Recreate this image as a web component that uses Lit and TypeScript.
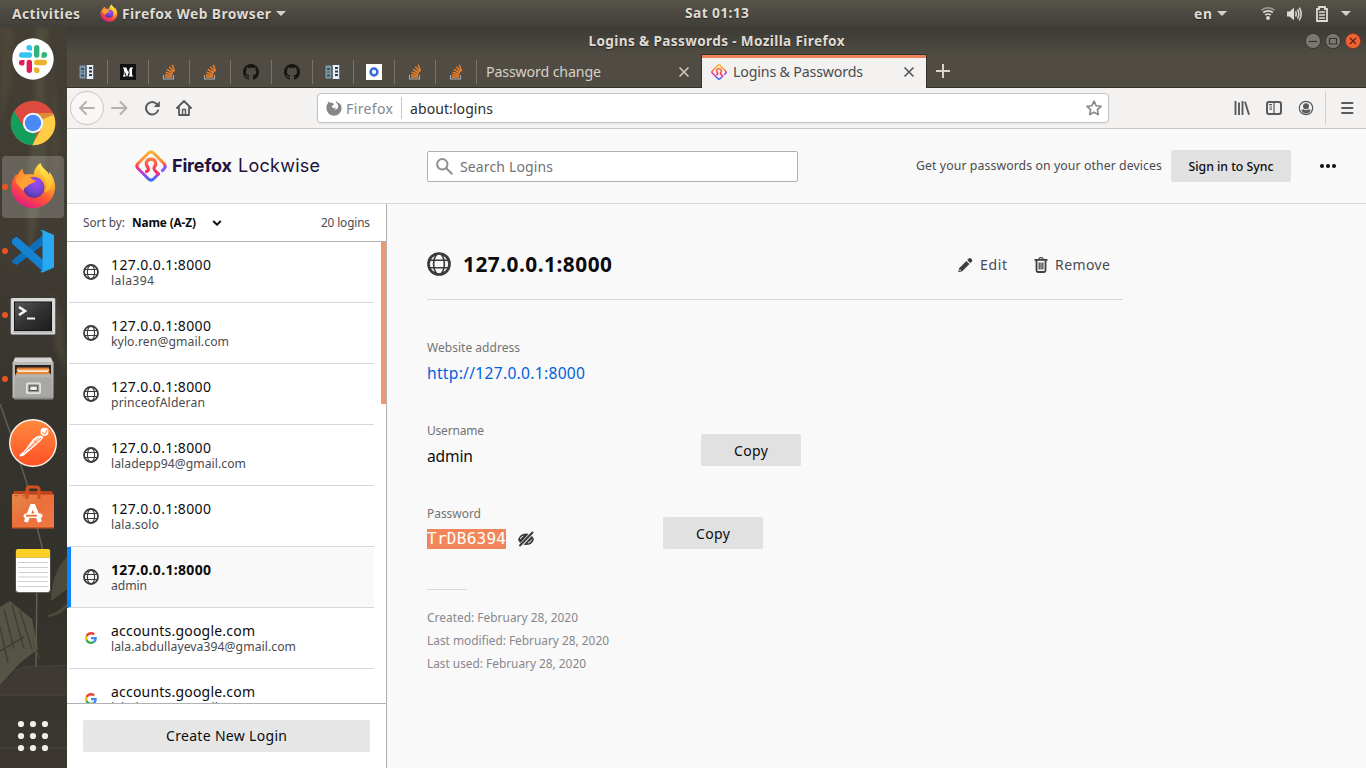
import { LitElement, html, svg, css, nothing } from 'lit';
import { customElement, property } from 'lit/decorators.js';

/** A single line of text tracked so that it fills a given width. */
@customElement('fit-text')
class FitText extends LitElement {
  @property() text = '';
  @property({ type: Number }) w = 0;
  static styles = css`
    :host { display: block; white-space: pre; flex: none; }
    .t { display: inline-block; }
  `;
  render() { return html`<span class="t">${this.text}</span>`; }
  updated() {
    const el = this.renderRoot.querySelector('.t') as HTMLElement;
    this.style.width = this.w + 'px';
    el.style.letterSpacing = '0px';
    const natural = el.getBoundingClientRect().width;
    el.style.letterSpacing = ((this.w - natural) / Math.max(1, this.text.length - 1)).toFixed(3) + 'px';
  }
}

const t = (text: string, w: number, cls = '') => html`<fit-text class=${cls} .text=${text} .w=${w}></fit-text>`;

const firefoxLogo = (size: number, id: string) => html`<svg width=${size} height=${size} viewBox="0 0 48 48">
  <defs>
    <linearGradient id="${id}a" x1=".8" y1="0" x2=".25" y2="1"><stop offset="0" stop-color="#fff44f"/><stop offset=".35" stop-color="#ffa72a"/><stop offset=".62" stop-color="#ff5634"/><stop offset="1" stop-color="#e31587"/></linearGradient>
    <radialGradient id="${id}b" cx=".6" cy=".3" r=".8"><stop offset="0" stop-color="#a04bf5"/><stop offset=".6" stop-color="#6d45c9"/><stop offset="1" stop-color="#4a2f8f"/></radialGradient>
    <linearGradient id="${id}c" x1="0" y1="0" x2="1" y2="1"><stop offset="0" stop-color="#ff7a2e"/><stop offset=".5" stop-color="#ffa436"/><stop offset="1" stop-color="#ff8a35"/></linearGradient>
    <linearGradient id="${id}d" x1="0" y1="0" x2="0" y2="1"><stop offset="0" stop-color="#fff04a"/><stop offset="1" stop-color="#ffb52b"/></linearGradient>
  </defs>
  <path fill="url(#${id}a)" d="M31 1c1 4 4 6 7 9 1 1 1 2 1.500 3l.5-3c4 4 6 10 6 15 0 13-10 22-22 22S1.500 38 1.500 25.500c0-5 2-9.500 4.500-12.500l2 .3c1-2.500 3-5 5-5.800 0 3 1 4.500 2 5.500 3-.5 6-.5 9 0 .5-5 3-9.500 7-12z"/>
  <circle cx="24.500" cy="26" r="10.800" fill="url(#${id}b)"/>
  <path fill="url(#${id}c)" d="M12.800 7.500c0 3 1 4.500 2.700 5.500 3 0 4 1 5.500 3.200 1 1.500 3.500 2.300 5.500 2.800-1 3-7.500 3-8.500 5.500-.5 1.500-4.500 1-4 5-3-2-6-7-8-8-.5-3 0-6 2-8.200 1-2.600 2.800-5 4.800-5.800z"/>
  <path fill="url(#${id}d)" opacity=".9" d="M31 1c-1.500 5-1 9 2.500 13 4 5 5 11 1.500 17 6-1 10-7 7-15-.3 1-1 1.500-1.500 1.500C41 10 33 8 31 1z"/>
</svg>`;

const lockwiseLogo = (size: number, id: string) => html`<svg width=${size} height=${size} viewBox="0 0 32 32" fill="none" stroke-linecap="round" stroke-linejoin="round">
  <defs>
    <linearGradient id="${id}a" x1="16" y1="0" x2="16" y2="32" gradientUnits="userSpaceOnUse"><stop offset="0" stop-color="#ffbd2f"/><stop offset=".35" stop-color="#ff8a3c"/><stop offset=".5" stop-color="#ff3750"/><stop offset=".7" stop-color="#c03be0"/><stop offset="1" stop-color="#1d77ff"/></linearGradient>
    <linearGradient id="${id}b" x1="16" y1="7" x2="16" y2="26" gradientUnits="userSpaceOnUse"><stop offset="0" stop-color="#ff8a3c"/><stop offset=".7" stop-color="#ff2f55"/><stop offset="1" stop-color="#e0309a"/></linearGradient>
  </defs>
  <path stroke="url(#${id}a)" stroke-width="3" d="M30 16.500 Q30.300 15 29 13.500 L18.500 3 Q16 .6 13.500 3 L3 13.500 Q.6 16 3 18.500 L13.500 29 Q16 31.400 18.500 29 L23 24.500"/>
  <path stroke="#9059ff" stroke-width="3.200" d="M27.500 20.500 Q29.500 19 30.200 17"/>
  <path stroke="url(#${id}b)" stroke-width="3.200" d="M11.500 21.500 Q14.500 20 12.800 17.300 C9.500 13 12 9.200 16 9.200 S22.500 13 19.200 17.300 Q18 19.500 23.500 24"/>
</svg>`;

const globe = (size: number) => html`<svg width=${size} height=${size} viewBox="0 0 16 16" fill="none" stroke="#3b3b3f">
  <circle cx="8" cy="8" r="7" stroke-width="1.800"/>
  <ellipse cx="8" cy="8" rx="3.600" ry="7" stroke-width="1.100"/>
  <path stroke-width="1.100" d="M1.500 5.500h13M1.500 10.500h13"/>
</svg>`;

const googleG = html`<svg width="12" height="12" viewBox="0 0 48 48">
  <path fill="#ea4335" d="M24 9.500c3.500 0 6.700 1.200 9.200 3.600l6.900-6.900C35.900 2.400 30.500 0 24 0 14.600 0 6.500 5.400 2.600 13.200l8 6.200C12.400 13.700 17.700 9.500 24 9.500z"/>
  <path fill="#4285f4" d="M47 24.500c0-1.600-.2-3.100-.4-4.500H24v9h12.900c-.6 3-2.300 5.500-4.800 7.200l7.700 6C44.400 38 47 31.800 47 24.500z"/>
  <path fill="#fbbc05" d="M10.500 28.600c-.5-1.500-.8-3-.8-4.600s.3-3.100.8-4.600l-8-6.200C.9 16.500 0 20.100 0 24s.9 7.500 2.600 10.800z"/>
  <path fill="#34a853" d="M24 48c6.500 0 11.900-2.100 15.900-5.800l-7.700-6c-2.200 1.500-4.900 2.300-8.200 2.300-6.300 0-11.600-4.200-13.500-9.900l-8 6.200C6.500 42.600 14.600 48 24 48z"/>
</svg>`;

const closeX = (c: string) => html`<svg width="12" height="12" viewBox="0 0 12 12" fill="none" stroke=${c} stroke-width="1.700"><path d="M1.500 1.500l9 9M10.500 1.500l-9 9"/></svg>`;
const caret = html`<svg width="10" height="5" viewBox="0 0 10 5"><path d="M0 0h10L5 5z" fill="#d6d2ca"/></svg>`;

const fav: Record<string, unknown> = {
  book: html`<svg width="16" height="16" viewBox="0 0 16 16"><path fill="#7f9bab" d="M.5 1.500h6v13h-6z"/><path fill="#3a4d5c" d="M2 4h3v2H2zM2 7.500h3v1H2zM2 10.500h3v2H2z"/><path fill="#e7eef2" d="M7.500 1h7v14h-7z"/><path fill="#2c3e50" d="M10 3h3v2h-3zM10 6.500h3v2h-3zM10 10h3v2h-3z"/><path fill="#34495e" d="M14.500 1.500h.7v13h-.7zM6.700 1.500h.8v13h-.8z"/></svg>`,
  medium: html`<svg width="16" height="16" viewBox="0 0 16 16"><path fill="#121212" d="M0 0h16v16H0z"/><path fill="#fff" d="M3 3.500h3.300l2 4.800 1.900-4.800H13v.7l-1 .9v5.900l1 .8v.7H8.700v-.7l.9-.8V6.300L7.300 12.500H6.800L4.600 6.700v3.800l1.200 1.300v.7H3v-.7l.9-1.300V5L3 4.200z"/></svg>`,
  so: html`<svg width="16" height="16" viewBox="0 0 16 16" fill="none"><path stroke="#a5adb3" stroke-width="1.100" d="M2.500 11v4h10v-4"/><path stroke="#f48024" stroke-width="1.400" d="M4 13h7M4 10.800l7 .6M4.600 8.200l6.700 1.900M6 5.400l5.900 3.500M8.300 2.600l4.400 5.200M11.300.8l2.200 6.400"/></svg>`,
  github: html`<svg width="16" height="16" viewBox="0 0 16 16"><path fill="#161616" d="M8 0C3.580 0 0 3.580 0 8c0 3.540 2.290 6.530 5.470 7.590.4.070.55-.17.55-.38 0-.19-.01-.82-.01-1.490-2.010.37-2.530-.49-2.690-.94-.09-.23-.48-.94-.82-1.130-.28-.15-.68-.52-.01-.53.63-.01 1.080.58 1.230.82.72 1.210 1.870.87 2.330.66.070-.52.28-.87.51-1.070-1.780-.2-3.640-.89-3.640-3.950 0-.87.31-1.590.82-2.150-.08-.2-.36-1.020.08-2.120 0 0 .67-.21 2.200.82.64-.18 1.320-.27 2-.27s1.360.09 2 .27c1.530-1.040 2.200-.82 2.200-.82.44 1.100.16 1.920.08 2.120.51.56.82 1.270.82 2.150 0 3.070-1.870 3.750-3.650 3.950.29.25.54.73.54 1.480 0 1.070-.01 1.930-.01 2.200 0 .21.15.46.55.38A8.010 8.010 0 0 0 16 8c0-4.420-3.580-8-8-8z"/></svg>`,
  ocircle: html`<svg width="16" height="16" viewBox="0 0 16 16"><path fill="#fff" d="M0 0h16v16H0z"/><circle cx="8" cy="8" r="3.400" fill="none" stroke="#2f6fd6" stroke-width="2.500"/></svg>`,
};

const slack = html`<svg width="42" height="42" viewBox="0 0 42 42"><circle cx="21" cy="21" r="20.700" fill="#fff"/>
  <g stroke-width="5.400" stroke-linecap="round">
    <path stroke="#36c5f0" d="M9.700 17h7.800"/><path stroke="#2eb67d" d="M24.700 9.700v7.400"/><path stroke="#ecb22e" d="M24.700 24.500h7.600"/><path stroke="#e01e5a" d="M17.300 24.500v7.700"/></g>
  <path fill="#36c5f0" d="M20 12.500h-2.700a2.800 2.800 0 1 1 2.700-2.800z"/><path fill="#2eb67d" d="M29.500 19.700V17a2.800 2.800 0 1 1 2.800 2.700z"/><path fill="#ecb22e" d="M22 29.500h2.700a2.800 2.800 0 1 1-2.700 2.800z"/><path fill="#e01e5a" d="M12.500 22v2.700A2.800 2.800 0 1 1 9.700 22z"/></svg>`;

const chrome = html`<svg width="46" height="46" viewBox="0 0 46 46">
  <circle cx="23" cy="23" r="22.200" fill="#dd4b3e"/>
  <path fill="#ffce44" d="M23 13h19.900A22.200 22.200 0 0 1 22 45.200L31.700 28z"/>
  <path fill="#119f5b" d="M22.500 45.200A22.200 22.200 0 0 1 4.200 11.200L14.300 28q4 6 12.700 4.200z"/>
  <path fill="#b53a2d" opacity=".45" d="M23 13h19.900l.7 1.700-12 5z"/>
  <circle cx="23" cy="23" r="10.200" fill="#f4f6fb"/><circle cx="23" cy="23" r="8.200" fill="#4a8af4"/></svg>`;

const vscode = html`<svg width="44" height="44" viewBox="0 0 44 44">
  <path fill="#0f6fb8" d="M1 31.500 32 6v10L6.500 35.500q-1 .7-2 0L1 33z"/>
  <path fill="#1583d3" d="M1 12.500v-1.700l3.500-2.500q1-.7 2 0L32 31v10.500z"/>
  <path fill="#1583d3" d="M1 11l31 28v3.500L1 14.500z"/>
  <path fill="#29a8f3" d="M31.500 1 43 6v32.500L31.500 43.500q-1.500.2-2.500-1.200 2.500.5 2.500-1.500V3.500Q31.500 1.500 29 2.200q1-1.400 2.500-1.200z"/></svg>`;

const terminal = html`<svg width="46" height="40" viewBox="0 -2 46 40">
  <defs><linearGradient id="tm" x1="0" y1="0" x2="1" y2="1"><stop offset="0" stop-color="#5a5a5a"/><stop offset=".5" stop-color="#323232"/><stop offset="1" stop-color="#1c1c1c"/></linearGradient></defs>
  <rect x=".5" y="1" width="45" height="37" rx="1.800" fill="#8d8d8d"/><rect x="1" y="1" width="44" height="36" rx="1.500" fill="#d9d9d9"/><path fill="#b8b8b8" d="M3 34h40v2H3z"/>
  <rect x="4" y="4.500" width="38" height="29.500" fill="#151515"/><rect x="5" y="5.500" width="36" height="27.500" fill="url(#tm)"/>
  <path d="M9 10l6 4-6 4" fill="none" stroke="#f4f4f4" stroke-width="2.600"/><path fill="#f4f4f4" d="M17 20.500h8v2h-8z"/></svg>`;

const files = html`<svg width="44" height="46" viewBox="0 0 44 46">
  <path fill="#d4d4d2" d="M4 1.500h36l2.500 6h-41z"/><path fill="#b9b9b7" d="M1.500 6h41v36h-41z"/><path fill="#262421" d="M4 9h36v12H4z"/>
  <path fill="#e07a30" d="M6 11.500h32v8H6z"/><path fill="#f3c27b" d="M5.500 13.500h33v1.500h-33z"/><path fill="#f6e9cf" d="M7 14.500h30v1.600H7z"/><path fill="#e88a3b" d="M5 16.500h34V19H5z"/>
  <path fill="#a7a7a5" d="M4.500 18.500h36l1.500 24.500H3z"/><path fill="#b4b4b2" d="M4.500 18.500h36l.2 3H4.300z"/><path fill="#8b8b89" d="M3 41.500h39v2H3z"/>
  <rect x="15" y="26.500" width="15" height="11.500" rx="1.800" fill="#e2e2e0"/><rect x="16.800" y="28.300" width="11.400" height="8" rx="1" fill="#9a9a98"/><rect x="18.800" y="30" width="7.500" height="4.500" fill="#f1f1ef" stroke="#494947" stroke-width="1"/></svg>`;

const postman = html`<svg width="50" height="50" viewBox="0 0 50 50">
  <defs><linearGradient id="pm" x1="0" y1="0" x2="0" y2="1"><stop offset="0" stop-color="#ff8a3f"/><stop offset="1" stop-color="#ff5125"/></linearGradient></defs>
  <circle cx="25" cy="25" r="24" fill="#fbf6f2"/><circle cx="25" cy="25" r="22.600" fill="url(#pm)"/>
  <circle cx="36.500" cy="13.700" r="4" fill="#fff"/><path d="M34 14.500l3.500 1.500 1.500-4" stroke="#ff7a3a" fill="none"/>
  <path fill="#fff" d="M33 17.500q-4-.5-8 3.500l-8 11-5.500 5 .5 1.500 3.500-.8L27 28q6-5 8.500-9z"/>
  <path stroke="#ff7336" stroke-width=".9" fill="none" d="M31 19.500 17 34M33 20 21 31M15.500 33.500l1 1.500M26 22l3 3.500"/></svg>`;

const software = html`<svg width="44" height="46" viewBox="0 0 44 46">
  <defs><linearGradient id="sw" x1="0" y1="0" x2="1" y2="1"><stop offset="0" stop-color="#e5894b"/><stop offset=".5" stop-color="#ec6f3a"/><stop offset="1" stop-color="#f07a49"/></linearGradient></defs>
  <path fill="#b9451c" d="M3 7h38l1.500 4h-41z"/><path fill="url(#sw)" d="M1 10h42v34H1z"/><path fill="#c24d20" opacity=".7" d="M1 9.500l4 3.500 4-3 4 3 4-3h26v1H1z"/><path fill="#c9572a" d="M1 43h42v1.500H1z"/>
  <path fill="none" stroke="#d4501f" stroke-width="3" d="M16 15V5.500Q16 3 18.500 3h6Q28 3 28 5.500V15"/>
  <path fill="none" stroke="#fff" stroke-width="4.200" d="M14.800 38 21 22h1.500L29 38"/><rect x="12.500" y="29.500" width="19" height="4.500" rx="2.200" fill="#fff"/><path stroke="#ec6f2a" stroke-width="1.800" d="M15 31.700h11"/></svg>`;

const notes = html`<svg width="36" height="46" viewBox="0 0 36 46">
  <rect x=".5" y="1" width="35" height="44" rx="3" fill="#6b675f"/><rect x="1" y="1" width="34" height="43" rx="3" fill="#fff"/>
  <path fill="#fbcf23" d="M1 9.500V4q0-3 3-3h28q3 0 3 3v5.500z"/><path fill="#d8b23a" d="M1 9.300h34v.8H1z"/>
  <path stroke="#cfcfcf" stroke-width="1" d="M3 14.500h30M3 19.500h30M3 24.500h30M3 29h30M3 33.500h30M3 38.500h30"/></svg>`;

@customElement('app-dock')
class AppDock extends LitElement {
  static styles = css`
    :host { display: block; width: 67px; flex: none; position: relative; overflow: hidden; background: #3b3831; }
    .wall { position: absolute; inset: 0; }
    .col { position: relative; height: 100%; display: flex; flex-direction: column; }
    .cell { height: 64px; width: 67px; box-sizing: border-box; padding-right: 1px; display: flex; align-items: center; justify-content: center; position: relative; }
    .cell.active { padding-bottom: 3px; }
    .cell.active::before { content: ''; position: absolute; left: 2px; top: 1px; width: 62px; height: 62px; border-radius: 4px; background: rgba(255,255,255,.2); }
    .cell svg { position: relative; display: block; }
    .dot { position: absolute; left: 2px; top: 29px; width: 6px; height: 6px; border-radius: 50%; background: #e95420; }
    .spacer { flex: 1; }
    .apps { height: 64px; }
    svg { display: block; }
  `;
  render() {
    const items: [unknown, boolean, boolean][] = [
      [slack, false, false], [chrome, false, false], [firefoxLogo(47, 'fd'), true, true], [vscode, true, false],
      [terminal, true, false], [files, true, false], [postman, false, false], [software, false, false], [notes, false, false],
    ];
    return html`
      <svg class="wall" width="67" height="741" viewBox="0 0 67 741">
        <defs>
          <linearGradient id="wg" x1="0" y1="0" x2="0" y2="1"><stop offset="0" stop-color="#443f35"/><stop offset=".3" stop-color="#403b33"/><stop offset=".5" stop-color="#37342e"/><stop offset=".75" stop-color="#33312b"/><stop offset="1" stop-color="#3b3730"/></linearGradient>
          <filter id="bl"><feGaussianBlur stdDeviation="2.500"/></filter>
        </defs>
        <path fill="url(#wg)" d="M0 0h67v741H0z"/>
        <g filter="url(#bl)" opacity=".65">
          <path fill="#565541" d="M36 0h12l-3 60 2 60-8 60-10 60-2-80 8-80z"/><path fill="#514b3b" d="M0 0h14l-4 60-10 40zM52 30l8 90-4 50-6-60zM50 260l12 30 5 60-12-30z"/>
        </g>
        <path stroke="#707062" stroke-width="1.500" fill="none" opacity=".7" d="M0 377q20 55 33 100M37 500l6 24M37 548l-1 92"/>
        <path fill="#5c5b4a" opacity=".85" d="M0 580l10-6 22 18 6 30-18 14-20 22z"/>
        <path stroke="#37362f" stroke-width="1.500" opacity=".7" fill="none" d="M4 582l10 40M12 578l12 44M20 584l12 38M0 600l8 36M0 624l24-14"/>
        <path fill="#565746" opacity=".7" d="M67 530q-15 14-16 44l16-12zM48 588q12-3 19-12v4q-8 9-19 10z"/>
        <path stroke="#4d4a40" stroke-width="1.500" fill="none" opacity=".7" d="M32 612l8 20M15 644l10-4 42-1M0 668h67M0 721h67"/>
        <path fill="#423e36" opacity=".6" d="M15 645l10-4h42v27H0v-10z"/>
      </svg>
      <div class="col">
        ${items.map(([icon, run, active]) => html`<div class="cell ${active ? 'active' : ''}">${run ? html`<span class="dot"></span>` : nothing}${icon}</div>`)}
        <div class="spacer"></div>
        <div class="cell apps"><svg width="32" height="32" viewBox="0 0 32 32" fill="#eeeeec">${[4, 16, 28].map(y => [4, 16, 28].map(x => svg`<circle cx=${x} cy=${y} r="3.100"/>`))}</svg></div>
      </div>`;
  }
}

@customElement('top-bar')
class TopBar extends LitElement {
  static styles = css`
    :host { display: grid; grid-template-columns: 685px auto 1fr; align-items: center; height: 27px; box-sizing: border-box; background: linear-gradient(#57534b, #413f39);
      font: 700 13.8px/26px "Noto Sans", sans-serif; color: #dfdbd2; text-shadow: 0 1px 1px rgba(0,0,0,.5); }
    .left { display: flex; align-items: center; padding-left: 12px; }
    .logo { margin: -2px 4px 0 20px; }
    .left > svg:last-child { margin-left: 5px; }
    .clock { padding-bottom: 1px; }
    .right { display: flex; align-items: center; justify-content: flex-end; padding-right: 15px; }
    .gap1 { margin: 0 34px 0 5px; }
    .wifi { margin-right: 12px; } .vol { margin-right: 14px; } .bat { margin-right: 13px; }
    svg { display: block; }
  `;
  render() {
    return html`
      <div class="left">${t('Activities', 68)}<div class="logo">${firefoxLogo(18, 'ft')}</div>${t('Firefox Web Browser', 149)}${caret}</div>
      ${t('Sat 01:13', 64, 'clock')}
      <div class="right">${t('en', 18)}<div class="gap1">${caret}</div>
        <svg class="wifi" width="14" height="13" viewBox="0 0 14 13" fill="none" stroke="#dfdbd2" stroke-width="1.700"><path opacity=".5" d="M.5 3.200Q7-1.400 13.500 3.200"/><path d="M2.200 5.600Q7 2.200 11.800 5.600M4.200 8Q7 6 9.800 8"/><circle cx="7" cy="11" r="1.900" fill="#dfdbd2" stroke="none"/></svg>
        <svg class="vol" width="15" height="14" viewBox="0 0 15 14" fill="none" stroke="#dfdbd2" stroke-width="1.500"><path fill="#dfdbd2" stroke="none" d="M0 4.500h2.500L7 .8v12.400L2.500 9.500H0z"/><path d="M8.500 4.500q1.500 2.500 0 5M10.500 2.500q2.700 4.500 0 9M12.300.7q3.700 6.300 0 12.600"/></svg>
        <svg class="bat" width="12" height="16" viewBox="0 0 12 16" fill="none"><path stroke="#dfdbd2" stroke-width="1.800" d="M1 15V3h2V1h6v2h2v12z"/><path stroke="#dfdbd2" stroke-width="1.500" d="M3 6h6M3 9h6M3 12h6"/></svg>
        ${caret}</div>`;
  }
}

@customElement('browser-chrome')
class BrowserChrome extends LitElement {
  static styles = css`
    :host { display: block; font-family: "Noto Sans", sans-serif; }
    svg { display: block; flex: none; }
    .frame { height: 61px; background: linear-gradient(#3b3a35, #504c44 28px, #504c44); display: flex; flex-direction: column; box-sizing: border-box; }
    .title { height: 28px; display: grid; grid-template-columns: 1fr auto 1fr; align-items: center; font: 700 13.6px/28px "Noto Sans", sans-serif; color: #dfdbd2; text-shadow: 0 1px 1px rgba(0,0,0,.5); }
    .wins { display: flex; justify-content: flex-end; gap: 4px; padding-right: 5px; }
    .tabs { height: 33px; display: flex; box-sizing: border-box; box-shadow: inset 0 -1px #33312c; font-size: 14.2px; color: #d6d1c8; }
    .pin { width: 41px; box-sizing: border-box; display: flex; align-items: center; justify-content: center; padding-right: 1px; position: relative; }
    .pin::after { content: ''; position: absolute; right: 0; top: 5px; width: 1px; height: 24px; background: #76736c; }
    .tab { display: flex; align-items: center; box-sizing: border-box; line-height: 32px; }
    .bg { width: 224px; padding: 0 11px 0 9px; justify-content: space-between; }
    .on { width: 226px; background: #f3f2f1; color: #4c4c4c; border: solid #33312c; border-width: 0 1px; border-top: 0; box-shadow: inset 0 3px #f08259, 0 -1px #33312c; padding: 0 11px 0 9px; justify-content: space-between; }
    .on .lab { display: flex; align-items: center; gap: 6px; }
    .plus { margin: 9px 0 0 9px; }
    .nav { height: 41px; box-sizing: border-box; background: #f3f2f1; border-bottom: 1px solid #c8c6c3; display: flex; align-items: center; }
    .back { width: 32px; height: 32px; border: 1px solid #c9c7c4; border-radius: 50%; background: #f8f7f6; display: flex; align-items: center; justify-content: center; margin-left: 3px; }
    .fwd { margin-left: 7px; } .rel { margin-left: 16px; } .home { margin-left: 16px; }
    .url { margin-left: 125px; width: 792px; height: 30px; box-sizing: border-box; border: 1px solid #c5c3c0; border-radius: 4px; background: #fff; display: flex; align-items: center; font-size: 14px; line-height: 28px; color: #2e2e2e; padding: 0 6px 0 8px; box-shadow: 0 1px 2px rgba(0,0,0,.06); }
    .url fit-text { padding-top: 1px; }
    .id { color: #86868a; display: flex; align-items: center; gap: 4px; border-right: 1px solid #c8c8c8; height: 22px; padding-right: 8px; margin-right: 8px; }
    .star { margin-left: auto; }
    .r { margin-left: auto; display: flex; align-items: center; gap: 16px; padding-right: 12px; }
    .menu { border-left: 1px solid #d2d0ce; height: 34px; padding-left: 14px; margin-left: -5px; display: flex; align-items: center; }
  `;
  render() {
    const pins = ['book', 'medium', 'so', 'so', 'github', 'github', 'book', 'ocircle', 'so', 'so'];
    const win = (fill: string, edge: string, d: string, ink: string) => html`<svg width="16" height="16" viewBox="0 0 16 16"><circle cx="8" cy="8" r="7.600" fill=${fill} stroke=${edge} stroke-width=".8"/><path d=${d} fill="none" stroke=${ink} stroke-width="1.100"/></svg>`;
    return html`
      <div class="frame">
        <div class="title"><span></span>${t('Logins & Passwords - Mozilla Firefox', 256)}
          <div class="wins">${win('#7a776f', '#302e2a', 'M4 8.500h8', '#34322d')}${win('#7a776f', '#302e2a', 'M4.500 5.500h7v5.500h-7z', '#34322d')}${win('#ed6337', '#8c3414', 'M5 5l6 6M11 5l-6 6', '#5c1d05')}</div></div>
        <div class="tabs">
          ${pins.map(p => html`<div class="pin">${fav[p]}</div>`)}
          <div class="tab bg">${t('Password change', 115)}${closeX('#c9c5bc')}</div>
          <div class="tab on"><div class="lab">${lockwiseLogo(16, 'lt')}${t('Logins & Passwords', 130)}</div>${closeX('#5b5b5b')}</div>
          <svg class="plus" width="14" height="14" viewBox="0 0 14 14"><path stroke="#d8d4cc" stroke-width="2" d="M7 0v14M0 7h14"/></svg>
        </div>
      </div>
      <div class="nav">
        <div class="back"><svg width="16" height="14" viewBox="0 0 16 14" fill="none" stroke="#b3b2b0" stroke-width="1.900" stroke-linecap="round" stroke-linejoin="round"><path d="M15 7H1M7 1L1 7l6 6"/></svg></div>
        <svg class="fwd" width="17" height="14" viewBox="0 0 17 14" fill="none" stroke="#b3b2b0" stroke-width="1.900" stroke-linecap="round" stroke-linejoin="round"><path d="M1 7h14M9.500 1l6 6-6 6"/></svg>
        <svg class="rel" width="16" height="16" viewBox="0 0 16 16" fill="none" stroke="#5a5a5a" stroke-width="2"><path d="M14 10.500A6.200 6.200 0 1 1 13 4.300" stroke-linecap="round"/><path d="M15.800 1v6h-6z" fill="#5a5a5a" stroke="none"/></svg>
        <svg class="home" width="16" height="16" viewBox="0 0 16 16" fill="none" stroke="#5a5a5a" stroke-width="1.800" stroke-linejoin="round" stroke-linecap="round"><path d="M1 8l7-7 7 7M3 7.500V15h10V7.500"/><path stroke-width="1.400" d="M6.500 14.500V9.500h3v5"/></svg>
        <div class="url">
          <div class="id"><svg width="16" height="16" viewBox="0 0 16 16"><path fill="#86868a" d="M10.300.7c.3 1 1.500 1.600 2.500 2.800l.8-.3c1.200 1.300 2 3 2 4.900a7.600 7.600 0 1 1-15.200 0c0-2 .6-3.600 1.700-5 0-.6.2-1.300.8-1.900.2.8.7 1.300 1.200 1.600 1-.3 2-.2 2.700.3.200.5.900.9 1.200 1.300-.5 1-2.200 1-2.200 2 0 1 1 1.700 2.200 1.500.8-.1 1.200-.8 2-.4-.4 1.200-1.500 1.800-2.700 1.800 2.400 1 5-.4 5-3 0-1.800-1.300-2.300-2-3.600-.3-.7-.2-1.400 0-2z"/></svg>${t('Firefox', 47)}</div>
          ${t('about:logins', 83)}
          <svg class="star" width="16" height="16" viewBox="0 0 16 16"><path fill="none" stroke="#858585" stroke-width="1.600" stroke-linejoin="round" d="M8 1.200l2.100 4.500 4.900.6-3.600 3.400.9 4.900L8 12.200l-4.300 2.400.9-4.900L1 6.300l4.900-.6z"/></svg>
        </div>
        <div class="r">
          <svg width="16" height="16" viewBox="0 0 16 16" stroke="#5a5a5a" stroke-width="1.900"><path d="M1.500 1v14M5 2.500V15M8.500 1v14M11 1.800l4 13"/></svg>
          <svg width="16" height="16" viewBox="0 0 16 16" fill="none" stroke="#5a5a5a"><rect x="1" y="2" width="14" height="12" rx="2" stroke-width="2"/><path stroke-width="1.200" d="M8 2v12M3 4.700h3M3.500 7h2.500M3.500 9.200h2.500"/></svg>
          <svg width="16" height="16" viewBox="0 0 16 16" fill="none" stroke="#5a5a5a"><circle cx="8" cy="8" r="6.700" stroke-width="1.200"/><circle cx="8" cy="6.300" r="3" fill="#5a5a5a" stroke="none"/><path fill="#5a5a5a" stroke="none" d="M3.300 9.800Q5 9.200 5.500 9.300 8 11.300 10.500 9.300q.5-.1 2.200.5-1 3.700-4.700 3.700T3.300 9.800z"/></svg>
          <div class="menu"><svg width="14" height="14" viewBox="0 0 14 14"><path stroke="#5a5a5a" stroke-width="2" stroke-linecap="round" d="M2 2h10.500M2 7h10.500M2 12h10.500"/></svg></div>
        </div>
      </div>`;
  }
}

type Login = { host: string; hw: number; user: string; uw: number; google?: boolean; active?: boolean };
const ip = '127.0.0.1:8000';
const logins: Login[] = [
  { host: ip, hw: 100, user: 'lala394', uw: 43 },
  { host: ip, hw: 100, user: 'kylo.ren@gmail.com', uw: 118 },
  { host: ip, hw: 100, user: 'princeofAlderan', uw: 94 },
  { host: ip, hw: 100, user: 'laladepp94@gmail.com', uw: 135 },
  { host: ip, hw: 100, user: 'lala.solo', uw: 48 },
  { host: ip, hw: 100, user: 'admin', uw: 36, active: true },
  { host: 'accounts.google.com', hw: 144, user: 'lala.abdullayeva394@gmail.com', uw: 185, google: true },
  { host: 'accounts.google.com', hw: 144, user: 'laladepp94@gmail.com', uw: 135, google: true },
];

@customElement('login-list')
class LoginList extends LitElement {
  static styles = css`
    :host { width: 320px; flex: none; box-sizing: border-box; border-right: 1px solid #b1b1b3; background: #fff; display: flex; flex-direction: column; font-family: "Noto Sans", sans-serif; }
    .sort { height: 38px; flex: none; box-sizing: border-box; border-bottom: 1px solid #b1b1b3; display: flex; align-items: center; padding: 0 16px; font-size: 11.8px; line-height: 37px; color: #4a4a4f; }
    .sort b { margin: 0 16px 0 7px; color: #0c0c0d; }
    .count { margin-left: auto; }
    .list { flex: 1; min-height: 0; overflow: hidden; position: relative; }
    .thumb { position: absolute; right: 0; top: 0; width: 5px; height: 162px; background: #f5956c; }
    .row { height: 61px; box-sizing: border-box; margin-right: 12px; display: flex; align-items: center; position: relative; padding: 0 0 2px 12px; border-left: 4px solid transparent; }
    .row::after { content: ''; position: absolute; left: -2px; right: 0; bottom: 0; height: 1px; background: #d7d7db; }
    .row.active { background: #f9f9fa; border-left-color: #0a84ff; }
    .ico { width: 16px; display: flex; justify-content: center; margin-right: 12px; }
    .host { font-size: 14px; line-height: 18px; color: #0c0c0d; }
    .active .host { font-weight: 700; }
    .user { font-size: 12.200px; line-height: 14px; color: #4a4a4f; }
    .foot { height: 65px; flex: none; box-sizing: border-box; border-top: 1px solid #b1b1b3; padding: 16px; }
    .btn { height: 32px; border-radius: 2px; background: #e6e6e6; display: flex; align-items: center; justify-content: center; font-size: 14px; line-height: 34px; color: #0c0c0d; }
    svg { display: block; }
  `;
  render() {
    return html`
      <div class="sort">${t('Sort by:', 42)}<b>${t('Name (A-Z)', 64)}</b>
        <svg width="10" height="6" viewBox="0 0 10 6"><path d="M1.200 1L5 4.700 8.800 1" fill="none" stroke="#0c0c0d" stroke-width="1.900"/></svg>
        <div class="count">${t('20 logins', 49)}</div></div>
      <div class="list">
        ${logins.map(l => html`<div class="row ${l.active ? 'active' : ''}"><div class="ico">${l.google ? googleG : globe(16)}</div><div>${t(l.host, l.hw, 'host')}${t(l.user, l.uw, 'user')}</div></div>`)}
        <div class="thumb"></div>
      </div>
      <div class="foot"><div class="btn">${t('Create New Login', 121)}</div></div>`;
  }
}

@customElement('login-detail')
class LoginDetail extends LitElement {
  static styles = css`
    :host { flex: 1; min-width: 0; background: #f9f9fa; padding: 40px 0 0 40px; font-family: "Noto Sans", sans-serif; color: #0c0c0d; }
    svg { display: block; }
    .head { width: 696px; height: 56px; box-sizing: border-box; border-bottom: 1px solid #d7d7db; display: flex; align-items: flex-start; padding: 4px 13px 0 0; }
    .head > svg { margin-top: 4px; }
    h2 { margin: 0 auto 0 12px; font-size: 20.800px; line-height: 32px; font-weight: 700; }
    .act { display: flex; align-items: center; font-size: 14px; line-height: 33px; color: #4a4a4f; gap: 7px; margin-left: 27px; }
    .lab { font-size: 12px; line-height: 18px; color: #737373; }
    .f1 { margin-top: 39px; height: 83px; }
    .row { height: 83px; display: flex; }
    .val { font-size: 15.600px; line-height: 24px; margin-top: 4px; }
    .link { color: #0060df; }
    .u { width: 274px; } .p { width: 236px; }
    .btn { width: 100px; height: 32px; margin-top: 12px; border-radius: 2px; background: #e1e1e2; font-size: 14px; line-height: 33px; display: flex; justify-content: center; }
    .pw { display: flex; align-items: center; gap: 12px; margin-top: 6px; }
    .sel { background: #f28559; color: #fff; font: 16px/20px "DejaVu Sans Mono", monospace; height: 20px; overflow: hidden; }
    .rule { width: 40px; height: 1px; background: #d7d7db; margin: 1px 0 16px; }
    .meta { font-size: 11.900px; line-height: 23px; color: #87878b; }
  `;
  render() {
    return html`
      <div class="head">${globe(24)}<h2>${t(ip, 149)}</h2>
        <div class="act"><svg width="16" height="16" viewBox="0 0 16 16" fill="#3e3e43"><path d="M1.200 15.200l.9-4 7.300-7.300 3.100 3.100-7.300 7.300zM10.200 3.100l1.600-1.600q1.200-1 2.300.1l.8.800q1 1.100 0 2.200l-1.600 1.600z"/><path fill="#f9f9fa" d="M2.700 12.100l1.500 1.500-1.800.5z"/></svg>${t('Edit', 27)}</div>
        <div class="act"><svg width="14" height="16" viewBox="0 0 14 16"><path fill="none" stroke="#3e3e43" stroke-width="1.800" d="M2.500 3v10.500q0 1.500 1.500 1.500h6q1.500 0 1.500-1.500V3M.5 2.800h13"/><path fill="none" stroke="#3e3e43" stroke-width="1.200" d="M4.800 2Q5 .7 7 .7T9.200 2M5.200 5.500v7M7 5.500v7M8.800 5.500v7"/></svg>${t('Remove', 55)}</div>
      </div>
      <div class="f1">${t('Website address', 93, 'lab')}${t('http://' + ip, 158, 'val link')}</div>
      <div class="row"><div class="u">${t('Username', 57, 'lab')}${t('admin', 46, 'val')}</div><div class="btn">${t('Copy', 34)}</div></div>
      <div class="row"><div class="p">${t('Password', 54, 'lab')}
        <div class="pw">${t('TrDB6394', 79, 'sel')}<svg width="16" height="16" viewBox="0 0 16 16"><path fill="#3b3b3f" d="M0 8.500Q2 2.500 8 2.500T16 8.500Q14 14 8 14T0 8.500z"/><path fill="none" stroke="#f9f9fa" stroke-width="1" d="M2.200 8q1.200-2.500 3-3M13.800 8.500q-1.200 2.700-4 3.500"/><path stroke="#f9f9fa" stroke-width="3.600" d="M1.500 15.500L15 1"/><path stroke="#3b3b3f" stroke-width="2" stroke-linecap="round" d="M2 14.500L14.500 1.500"/></svg></div></div>
        <div class="btn">${t('Copy', 34)}</div></div>
      <div class="rule"></div>
      ${t('Created: February 28, 2020', 151, 'meta')}${t('Last modified: February 28, 2020', 182, 'meta')}${t('Last used: February 28, 2020', 159, 'meta')}`;
  }
}

@customElement('app-root')
class AppRoot extends LitElement {
  static styles = css`
    :host { display: flex; flex-direction: column; width: 1366px; height: 768px; overflow: hidden; font-family: "Noto Sans", sans-serif; }
    .main { flex: 1; min-height: 0; display: flex; }
    .win { flex: 1; min-width: 0; display: flex; flex-direction: column; background: #f9f9fa; }
    .header { height: 75px; flex: none; box-sizing: border-box; border-bottom: 1px solid #d7d7db; display: flex; align-items: center; padding: 0 30px 0 68px; }
    .brand { display: flex; align-items: center; width: 292px; font: 18px/34px Inter, sans-serif; color: #20123a; }
    .b1 { font-weight: 700; margin: 0 6px 0 5px; }
    .search { width: 371px; height: 31px; box-sizing: border-box; border: 1px solid #b1b1b3; border-radius: 2px; background: #fff; display: flex; align-items: center; gap: 7px; padding-left: 8px; font-size: 14px; line-height: 32px; color: #737373; }
    .search fit-text { padding-top: 1px; }
    .sync { margin-left: auto; font-size: 12.300px; line-height: 34px; color: #4a4a4f; }
    .btn { margin: 0 29px 0 9px; width: 120px; height: 32px; border-radius: 2px; background: #e1e1e2; display: flex; justify-content: center; font-size: 12.300px; line-height: 34px; color: #0c0c0d; font-weight: 500; }
    .body { flex: 1; min-height: 0; display: flex; }
    svg { display: block; flex: none; }
  `;
  render() {
    return html`
      <top-bar></top-bar>
      <div class="main">
        <app-dock></app-dock>
        <div class="win">
          <browser-chrome></browser-chrome>
          <div class="header">
            <div class="brand">${lockwiseLogo(32, 'lh')}${t('Firefox', 60, 'b1')}${t('Lockwise', 82)}</div>
            <div class="search"><svg width="17" height="17" viewBox="0 0 17 17" fill="none" stroke="#8f8f92" stroke-width="2"><circle cx="6.300" cy="6.300" r="5.200"/><path d="M10 10l6.300 6.300"/></svg>${t('Search Logins', 93)}</div>
            ${t('Get your passwords on your other devices', 246, 'sync')}
            <div class="btn">${t('Sign in to Sync', 85)}</div>
            <svg width="16" height="16" viewBox="0 0 16 16" fill="#0c0c0d"><circle cx="2" cy="8" r="2"/><circle cx="8" cy="8" r="2"/><circle cx="14" cy="8" r="2"/></svg>
          </div>
          <div class="body"><login-list></login-list><login-detail></login-detail></div>
        </div>
      </div>`;
  }
}
